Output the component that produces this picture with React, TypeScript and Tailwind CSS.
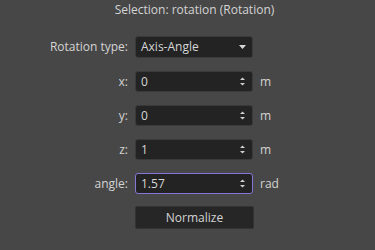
import React from "react";

const font = { fontFamily: '"Open Sans", "DejaVu Sans", sans-serif' };

function SpinArrows() {
  return (
    <svg width="7" height="11" viewBox="0 0 7 11" className="text-[#cfcfcf]">
      <path d="M1 4 L3.5 1.5 L6 4 Z" fill="currentColor" />
      <path d="M1 7 L3.5 9.5 L6 7 Z" fill="currentColor" />
    </svg>
  );
}

function SpinBox({ value, focused }: { value: string; focused?: boolean }) {
  return (
    <div
      className={`h-[21px] w-[118px] rounded-[3px] border bg-[#232323] flex items-center justify-between pl-[5px] pr-[6px] ${
        focused ? "border-[#8377d6]" : "border-[#3a3a3a]"
      }`}
    >
      <span className="text-[#d6d6d6] leading-none">{value}</span>
      <SpinArrows />
    </div>
  );
}

const rows = [
  { label: "x:", value: "0", unit: "m" },
  { label: "y:", value: "0", unit: "m" },
  { label: "z:", value: "1", unit: "m" },
  { label: "angle:", value: "1.57", unit: "rad", focused: true },
];

export default function App() {
  return (
    <div
      className="w-[375px] h-[250px] bg-[#474747] text-[#d4d4d4] text-[12px] overflow-hidden"
      style={font}
    >
      <div className="pt-[1px] pl-[14px] h-[19px] flex items-center justify-center">
        Selection: rotation (Rotation)
      </div>
      <div className="mt-[17px] grid grid-cols-[128px_118px_auto] gap-x-[7px] items-center">
        <span className="justify-self-end">Rotation type:</span>
        <div className="h-[22px] rounded-[3px] border border-[#3a3a3a] bg-[#232323] flex items-center justify-between pl-[5px] pr-[6px]">
          <span className="text-[#d6d6d6]">Axis-Angle</span>
          <svg width="7" height="4" viewBox="0 0 7 4">
            <path d="M0 0 L7 0 L3.5 4 Z" fill="#d8d8d8" />
          </svg>
        </div>
        <span />
        {rows.map((r) => (
          <React.Fragment key={r.label}>
            <span className="justify-self-end mt-[13px]">{r.label}</span>
            <div className="mt-[13px]">
              <SpinBox value={r.value} focused={r.focused} />
            </div>
            <span className="mt-[13px]">{r.unit}</span>
          </React.Fragment>
        ))}
        <span />
        <button className="mt-[12px] h-[23px] w-[119px] rounded-[2px] border border-[#333] bg-[#262626] text-[#d4d4d4] flex items-center justify-center">
          Normalize
        </button>
        <span />
      </div>
    </div>
  );
}
